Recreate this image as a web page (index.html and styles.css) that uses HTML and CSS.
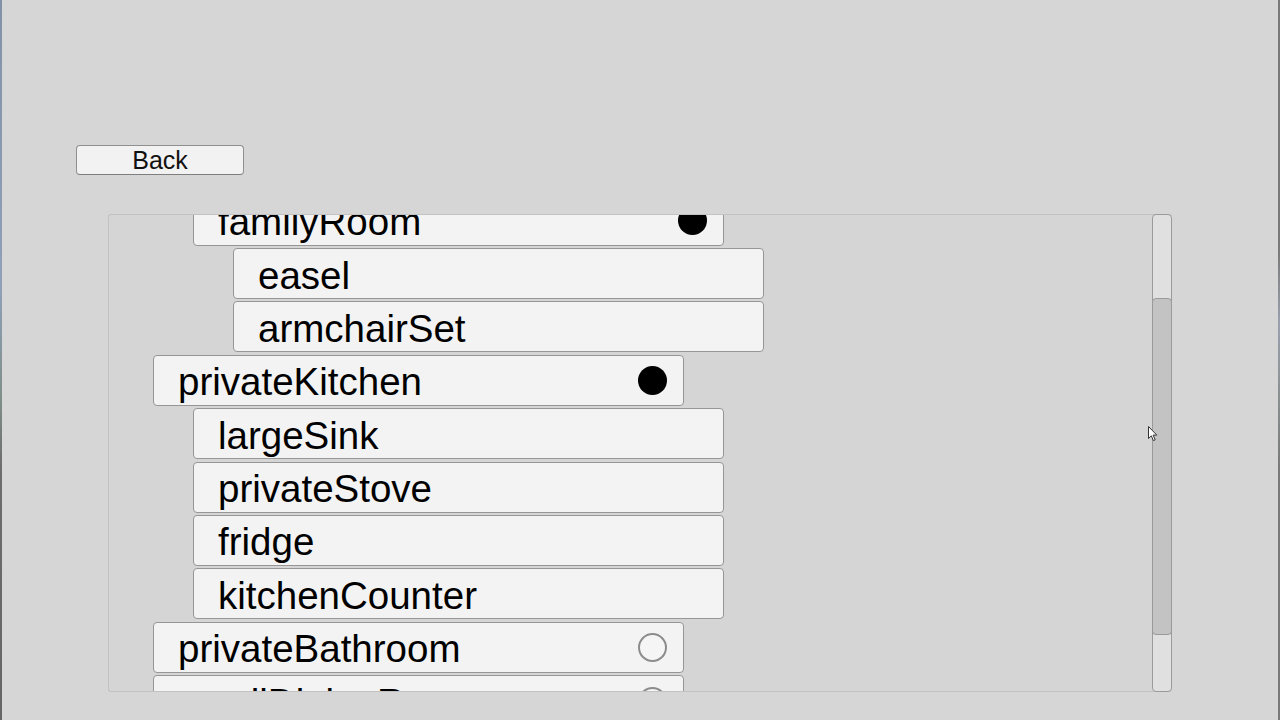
FILE: index.html
```html
<!DOCTYPE html>
<html>
<head>
<meta charset="utf-8">
<link rel="stylesheet" href="styles.css">
</head>
<body>
<div class="frame">
  <div class="edge edge-left"></div>
  <main class="main">
    <button class="back">Back</button>
    <section class="scroll">
      <div class="viewport">
        <ul class="list">
          <li class="row lvl2"><span class="label">familyRoom</span><span class="dot filled"></span></li>
          <li class="row lvl3"><span class="label">easel</span></li>
          <li class="row lvl3"><span class="label">armchairSet</span></li>
          <li class="row lvl1"><span class="label">privateKitchen</span><span class="dot filled"></span></li>
          <li class="row lvl2"><span class="label">largeSink</span></li>
          <li class="row lvl2"><span class="label">privateStove</span></li>
          <li class="row lvl2"><span class="label">fridge</span></li>
          <li class="row lvl2"><span class="label">kitchenCounter</span></li>
          <li class="row lvl1"><span class="label">privateBathroom</span><span class="dot empty"></span></li>
          <li class="row lvl1"><span class="label">smallDiningRoom</span><span class="dot empty"></span></li>
        </ul>
      </div>
      <div class="scrollbar"><div class="thumb"></div></div>
    </section>
    <svg class="cursor" width="10" height="16" viewBox="0 0 10 16">
      <path d="M0.5 0.5 L0.5 12.5 L3.3 9.8 L5.4 14.6 L7.2 13.8 L5.1 9.1 L8.8 9.1 Z" fill="#ffffff" stroke="#333333" stroke-width="1" stroke-linejoin="round"/>
    </svg>
  </main>
  <div class="edge edge-right"></div>
</div>
</body>
</html>
```
FILE: styles.css
```css
* { box-sizing: border-box; }
html, body {
  margin: 0;
  padding: 0;
  width: 1280px;
  height: 720px;
  overflow: hidden;
  background: #d6d6d6;
  font-family: "Liberation Sans", Arial, sans-serif;
  color: #000;
}
.frame {
  display: flex;
  width: 1280px;
  height: 720px;
}
.edge {
  width: 2px;
  flex: none;
}
.edge-left {
  background: linear-gradient(to bottom, #8391a8 0%, #8fa0b8 40%, #7f8f8a 55%, #6d6d6d 65%, #666 100%);
}
.edge-right {
  background: linear-gradient(to bottom, #7a7a7a 0%, #7a7a7a 35%, #9aa0ae 45%, #8a9090 55%, #7a7a7a 65%, #7a7a7a 100%);
}
.main {
  position: relative;
  flex: 1;
  padding: 145px 0 0 74px;
}
.back {
  display: block;
  width: 168px;
  height: 30px;
  padding: 0;
  margin: 0;
  background: #f2f2f2;
  border: 1px solid #8f8f8f;
  border-bottom-color: #7e7e7e;
  border-radius: 4px;
  font-family: "Liberation Sans", Arial, sans-serif;
  font-size: 25px;
  line-height: 28px;
  color: #111;
  text-align: center;
}
.scroll {
  display: flex;
  margin: 39px 0 0 32px;
  width: 1064px;
  height: 478px;
  border: 1px solid #c2c2c2;
  border-right: none;
  border-radius: 3px;
  background: #d5d5d5;
}
.viewport {
  flex: 1;
  overflow: hidden;
}
.list {
  list-style: none;
  margin: -20.4px 0 0 0;
  padding: 0;
}
.row {
  display: flex;
  align-items: center;
  justify-content: space-between;
  width: 531px;
  height: 51px;
  margin-bottom: 2.4px;
  padding: 0 16px 0 24px;
  background: #f3f3f3;
  border: 1px solid #969696;
  border-radius: 4px;
}
.lvl1 { margin-left: 44px; }
.lvl2 { margin-left: 84px; }
.lvl3 { margin-left: 124px; }
.label {
  font-size: 38.5px;
  line-height: 51px;
  padding-top: 3px;
  white-space: nowrap;
}
.dot {
  width: 29px;
  height: 29px;
  border-radius: 50%;
  flex: none;
  margin-top: 1px;
}
.dot.filled { background: #000; }
.dot.empty { border: 2px solid #8c8c8c; background: #f5f5f5; }
.scrollbar {
  width: 20px;
  flex: none;
  margin-top: -1px;
  margin-bottom: -1px;
  background: #e0e0e0;
  border: 1px solid #9a9a9a;
  border-radius: 4px;
  padding-top: 83px;
}
.thumb {
  height: 337px;
  margin: 0 -1px;
  background: #c3c3c3;
  border: 1px solid #9a9a9a;
  border-radius: 4px;
}
.cursor {
  position: absolute;
  left: 1146px;
  top: 426px;
}
```
